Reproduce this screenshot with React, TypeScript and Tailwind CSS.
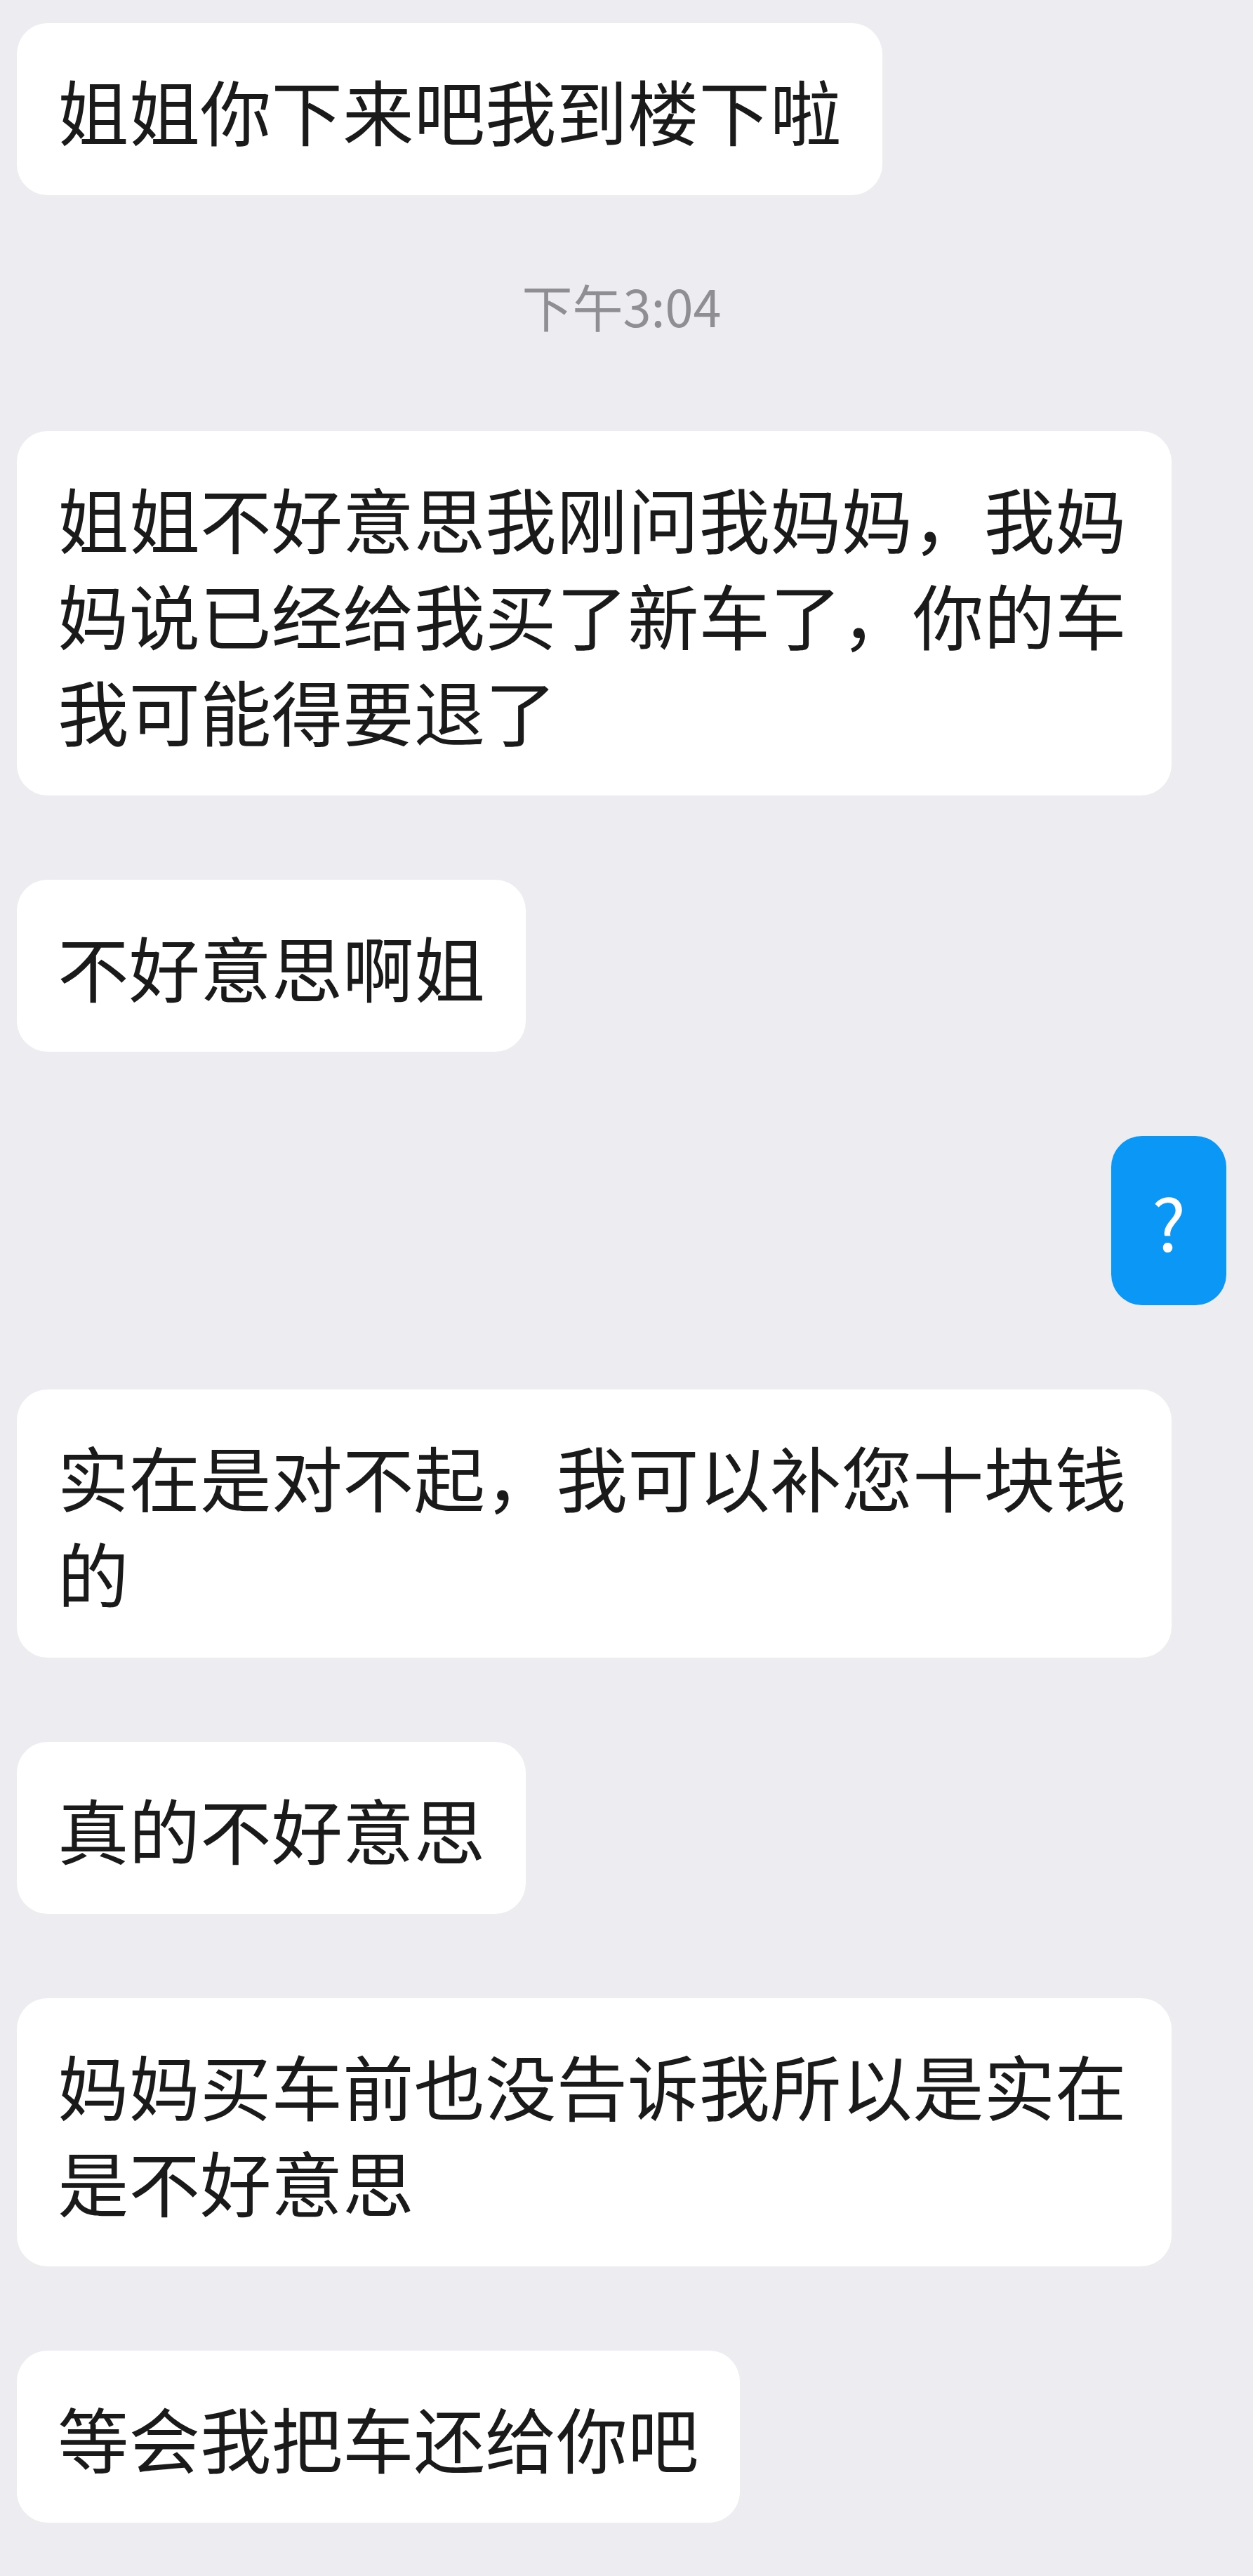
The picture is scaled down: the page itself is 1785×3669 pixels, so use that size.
import React from 'react';

type Msg =
  | { kind: 'in'; text: string }
  | { kind: 'out'; text: string }
  | { kind: 'time'; text: string };

const messages: Msg[] = [
  { kind: 'in', text: '姐姐你下来吧我到楼下啦' },
  { kind: 'time', text: '下午3:04' },
  { kind: 'in', text: '姐姐不好意思我刚问我妈妈，我妈妈说已经给我买了新车了，你的车我可能得要退了' },
  { kind: 'in', text: '不好意思啊姐' },
  { kind: 'out', text: '?' },
  { kind: 'in', text: '实在是对不起，我可以补您十块钱的' },
  { kind: 'in', text: '真的不好意思' },
  { kind: 'in', text: '妈妈买车前也没告诉我所以是实在是不好意思' },
  { kind: 'in', text: '等会我把车还给你吧' },
];

const font = { fontFamily: '"Noto Sans CJK SC", "Noto Sans", sans-serif' };

const App: React.FC = () => {
  return (
    <div
      className="min-h-[3669px] w-full bg-[#ededf1] pt-[33px] pb-[81px] pl-[24px] pr-[38px]"
      style={font}
    >
      <div className="flex flex-col gap-[120px]">
        {messages.map((m, i) => {
          if (m.kind === 'time') {
            return (
              <div key={i} className="h-[96px] text-center text-[72px] leading-[74px] text-[#8e8e93]">
                {m.text}
              </div>
            );
          }
          if (m.kind === 'out') {
            return (
              <div key={i} className="flex justify-end">
                <div className="rounded-[44px] bg-[#0b97f6] px-[58px] py-[52px] text-[101.5px] leading-[137px] text-white">
                  {m.text}
                </div>
              </div>
            );
          }
          return (
            <div key={i} className="flex justify-start">
              <div className="max-w-[1645px] rounded-[44px] bg-white px-[58px] py-[54px] text-[101.5px] leading-[137px] text-[#1a1a1a]">
                {m.text}
              </div>
            </div>
          );
        })}
      </div>
    </div>
  );
};

export default App;
